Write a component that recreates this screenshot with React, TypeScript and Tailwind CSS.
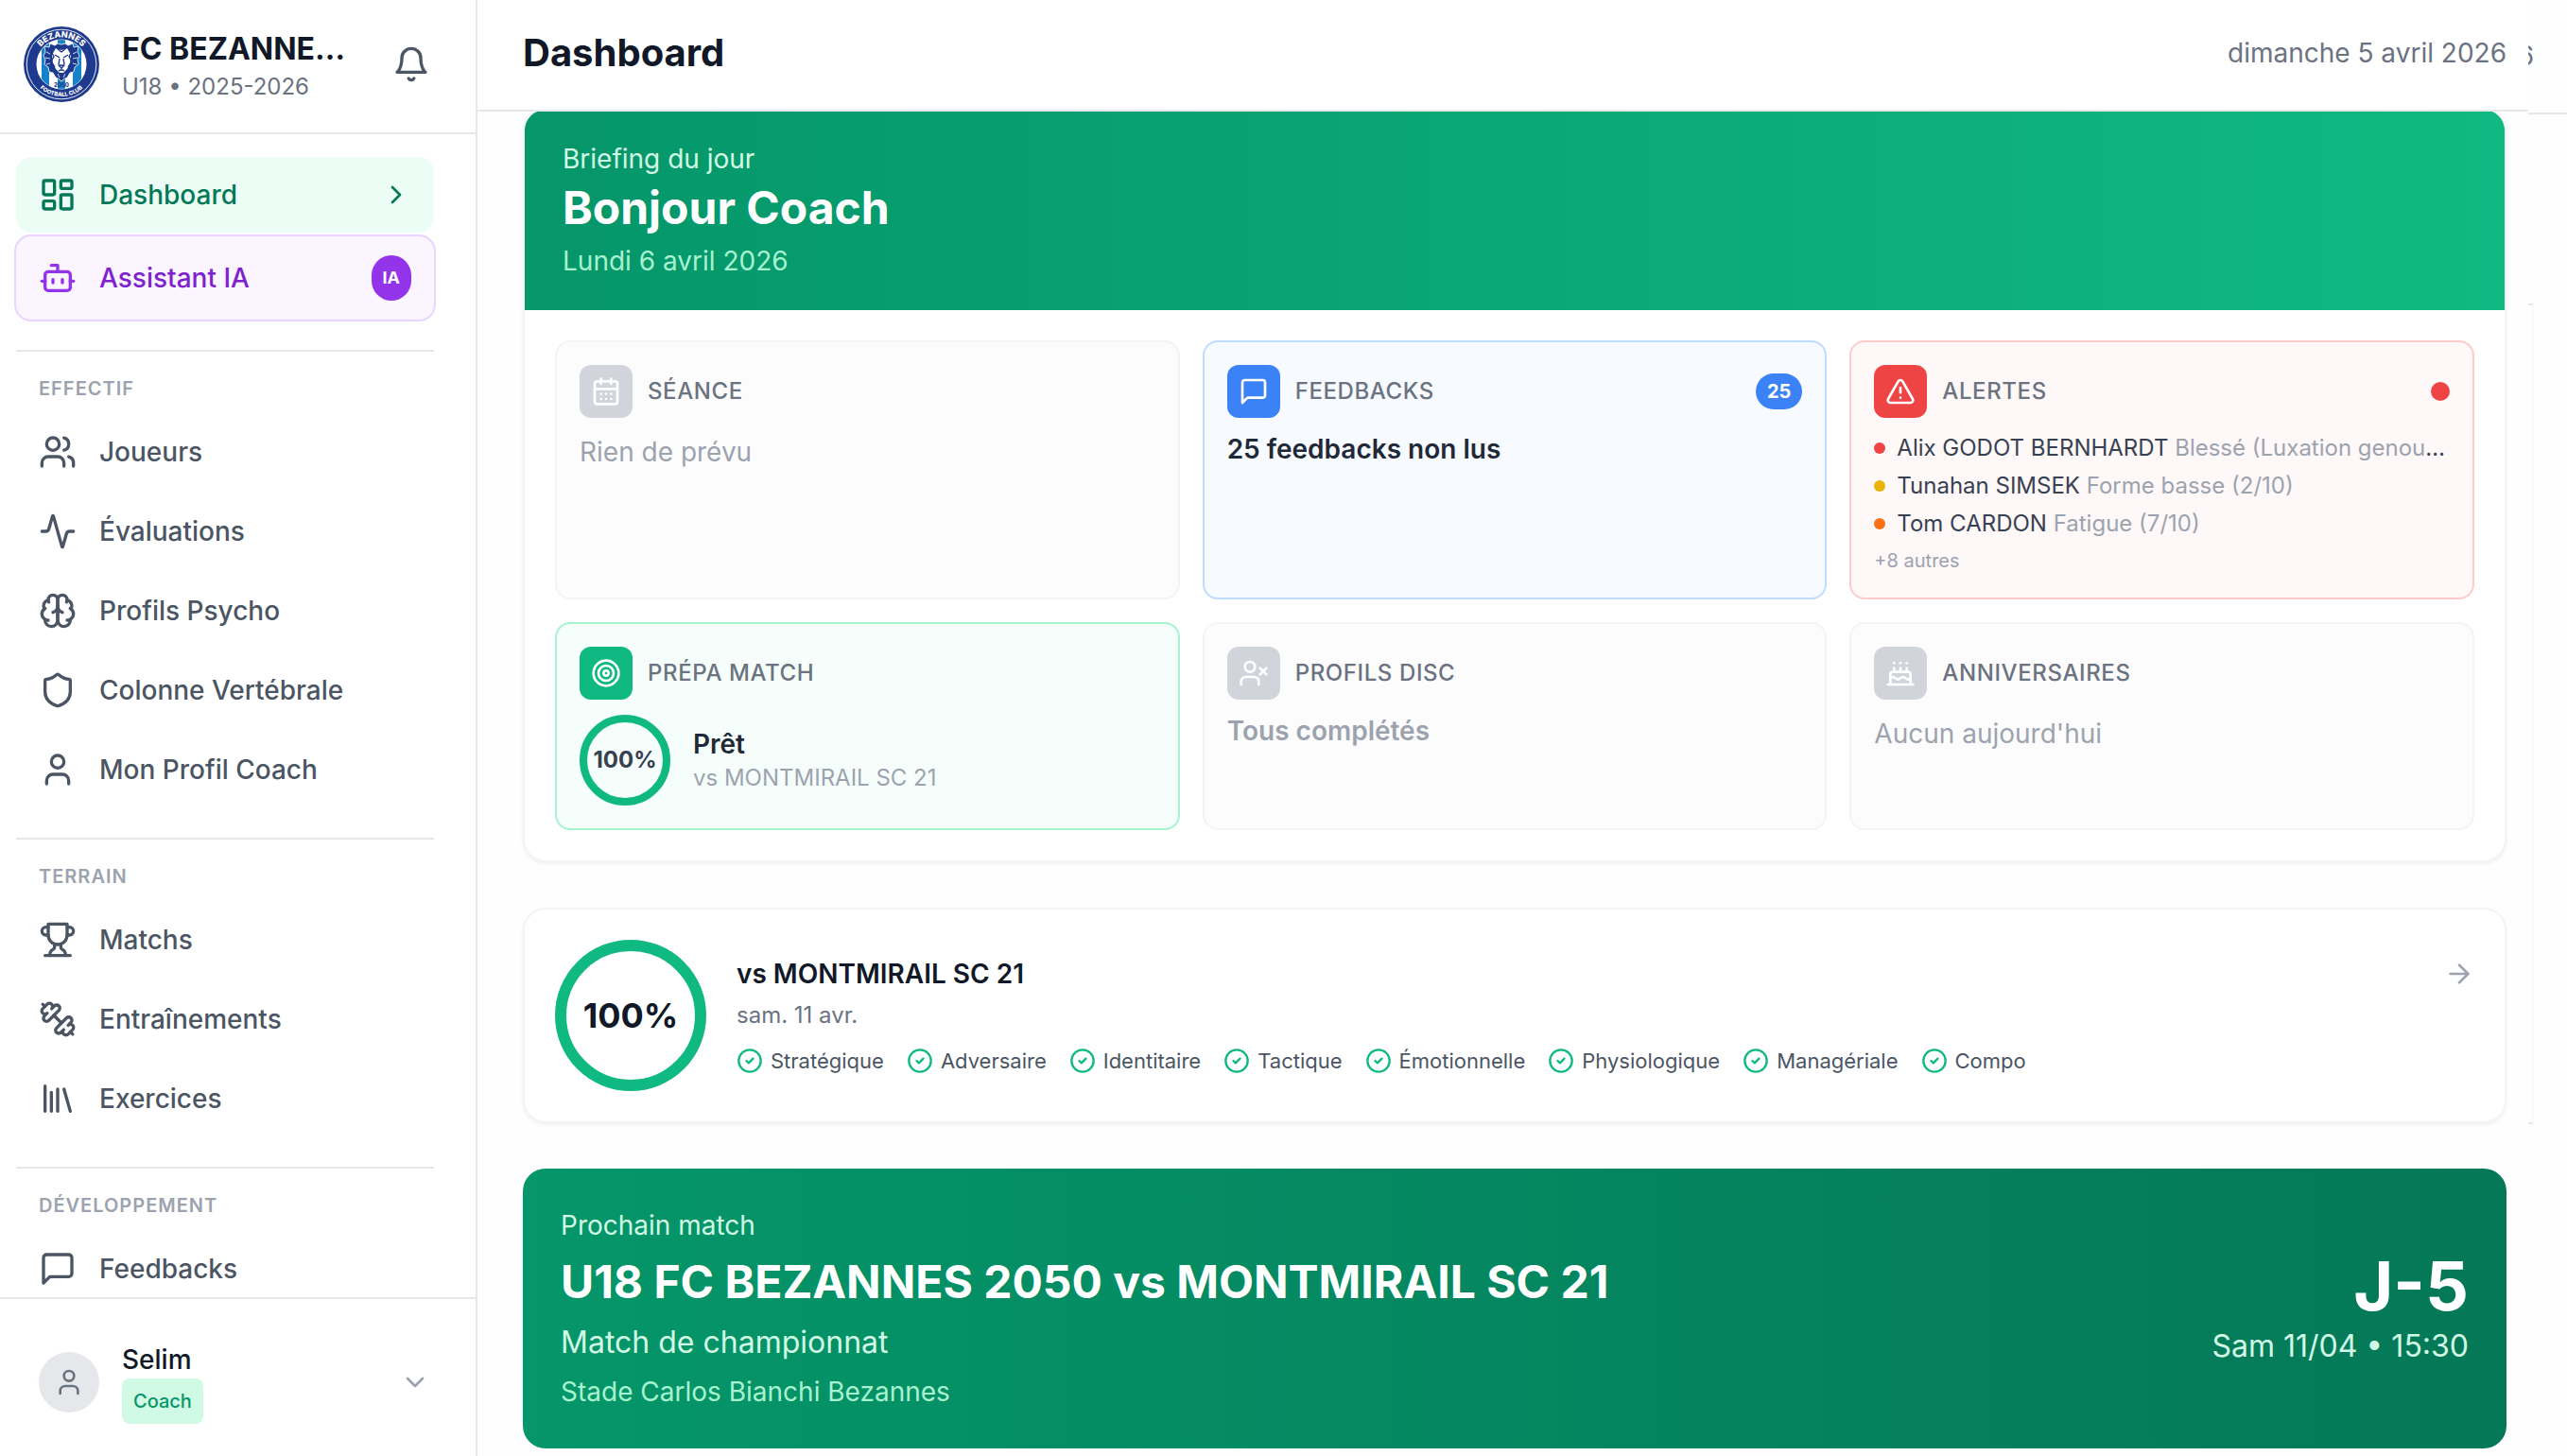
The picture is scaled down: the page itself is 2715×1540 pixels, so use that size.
import type { ReactNode } from 'react';
import {
  Activity,
  ArrowRight,
  Bot,
  Cake,
  CalendarDays,
  ChevronDown,
  ChevronRight,
  CircleCheck,
  LayoutDashboard,
  Library,
  Shield,
  Target,
  TriangleAlert,
  User,
  UserX,
  Users,
} from 'lucide-react';

type IconProps = { className?: string };

function StrokeIcon({ className, paths }: IconProps & { paths: string[] }) {
  return (
    <svg
      className={className}
      viewBox="0 0 24 24"
      fill="none"
      stroke="currentColor"
      strokeWidth="2"
      strokeLinecap="round"
      strokeLinejoin="round"
      aria-hidden="true"
    >
      {paths.map((d) => (
        <path key={d} d={d} />
      ))}
    </svg>
  );
}

const BellIcon = ({ className }: IconProps) => (
  <StrokeIcon
    className={className}
    paths={['M6 8a6 6 0 0 1 12 0c0 7 3 9 3 9H3s3-2 3-9', 'M10.3 21a1.94 1.94 0 0 0 3.4 0']}
  />
);

const MessageIcon = ({ className }: IconProps) => (
  <StrokeIcon className={className} paths={['M21 15a2 2 0 0 1-2 2H7l-4 4V5a2 2 0 0 1 2-2h14a2 2 0 0 1 2 2z']} />
);

const BrainIcon = ({ className }: IconProps) => (
  <StrokeIcon
    className={className}
    paths={[
      'M12 5a3 3 0 1 0-5.997.125 4 4 0 0 0-2.526 5.77 4 4 0 0 0 .556 6.588A4 4 0 1 0 12 18Z',
      'M12 5a3 3 0 1 1 5.997.125 4 4 0 0 1 2.526 5.77 4 4 0 0 1-.556 6.588A4 4 0 1 1 12 18Z',
      'M15 13a4.5 4.5 0 0 1-3-4 4.5 4.5 0 0 1-3 4',
      'M17.599 6.5a3 3 0 0 0 .399-1.375',
      'M6.003 5.125A3 3 0 0 0 6.401 6.5',
      'M3.477 10.896a4 4 0 0 1 .585-.396',
      'M19.938 10.5a4 4 0 0 1 .585.396',
      'M6 18a4 4 0 0 1-1.967-.516',
      'M19.967 17.484A4 4 0 0 1 18 18',
    ]}
  />
);

const TrophyIcon = ({ className }: IconProps) => (
  <StrokeIcon
    className={className}
    paths={[
      'M6 9H4.5a2.5 2.5 0 0 1 0-5H6',
      'M18 9h1.5a2.5 2.5 0 0 0 0-5H18',
      'M4 22h16',
      'M10 14.66V17c0 .55-.47.98-.97 1.21C7.85 18.75 7 20.24 7 22',
      'M14 14.66V17c0 .55.47.98.97 1.21C16.15 18.75 17 20.24 17 22',
      'M18 2H6v7a6 6 0 0 0 12 0V2Z',
    ]}
  />
);

const DumbbellIcon = ({ className }: IconProps) => (
  <StrokeIcon
    className={className}
    paths={[
      'M14.4 14.4 9.6 9.6',
      'M18.657 21.485a2 2 0 1 1-2.829-2.828l-1.767 1.768a2 2 0 1 1-2.829-2.829l6.364-6.364a2 2 0 1 1 2.829 2.829l-1.768 1.767a2 2 0 1 1 2.828 2.829z',
      'm21.5 21.5-1.4-1.4',
      'M3.9 3.9 2.5 2.5',
      'M6.404 12.768a2 2 0 1 1-2.829-2.829l1.768-1.767a2 2 0 1 1-2.828-2.829l2.828-2.828a2 2 0 1 1 2.829 2.828l1.767-1.768a2 2 0 1 1 2.829 2.829z',
    ]}
  />
);

function ClubLogo() {
  return (
    <svg className="size-20 shrink-0" viewBox="0 0 80 80" role="img" aria-label="FC Bezannes">
      <defs>
        <path id="logo-top" d="M11.5 40a28.5 28.5 0 0 1 57 0" />
        <path id="logo-bottom" d="M6 40a34 34 0 0 0 68 0" />
        <clipPath id="logo-disc">
          <circle cx="40" cy="40" r="26" />
        </clipPath>
      </defs>
      <circle cx="40" cy="40" r="40" fill="#1e3a8f" />
      <circle cx="40" cy="40" r="36.8" fill="none" stroke="#fff" strokeWidth="0.9" />
      <circle cx="40" cy="40" r="26.5" fill="#fff" />
      <g clipPath="url(#logo-disc)" fill="#1583cc">
        <path d="M19 10h8v60h-8zM36 10h8v60h-8zM52 10h9v60h-9z" />
      </g>
      <path
        d="M40 19l4-1 3 2 5-2 1 4 5-1-1 6 2 4-2 4 1 5-4 3-1 5-4 1-3 5-4 2-2 2-2-2-4-2-3-5-4-1-1-5-4-3 1-5-2-4 2-4-1-6 5 1 1-4 5 2 3-2z"
        fill="#1e3a8f"
        stroke="#fff"
        strokeWidth="0.8"
      />
      <path d="M34 23l6 2 6-2 4 7-1 9-3 6-4 4h-4l-4-4-3-6-1-9z" fill="#fff" />
      <path
        d="M33 30l5 3M47 30l-5 3M38 34l-1 6M42 34l1 6M37 41h6l-3 3zM40 44v2M37 47q3-2 6 0M29 26l3 6-3 5 4 6M51 26l-3 6 3 5-4 6M35 23l5 4 5-4M40 20v4"
        fill="none"
        stroke="#1e3a8f"
        strokeWidth="1.4"
        strokeLinejoin="round"
      />
      <path d="M24 27l4 2M23 33l5 1M24 40l4-1M56 27l-4 2M57 33l-5 1M56 40l-4-1M36 50l2 4M44 50l-2 4" stroke="#fff" strokeWidth="0.8" />
      <g fill="#fff" fontFamily="Inter, sans-serif" fontWeight="800" textAnchor="middle">
        <text fontSize="9">
          <textPath href="#logo-top" startOffset="50%">BEZANNES</textPath>
        </text>
        <text fontSize="6">
          <textPath href="#logo-bottom" startOffset="50%">FOOTBALL CLUB</textPath>
        </text>
        <text x="40" y="64" fontSize="6" fill="#1e3a8f">2050</text>
      </g>
    </svg>
  );
}

type NavEntry = { label: string; icon: (props: IconProps) => ReactNode };

const sections: { title: string; items: NavEntry[] }[] = [
  {
    title: 'Effectif',
    items: [
      { label: 'Joueurs', icon: (p) => <Users {...p} /> },
      { label: 'Évaluations', icon: (p) => <Activity {...p} /> },
      { label: 'Profils Psycho', icon: BrainIcon },
      { label: 'Colonne Vertébrale', icon: (p) => <Shield {...p} /> },
      { label: 'Mon Profil Coach', icon: (p) => <User {...p} /> },
    ],
  },
  {
    title: 'Terrain',
    items: [
      { label: 'Matchs', icon: TrophyIcon },
      { label: 'Entraînements', icon: DumbbellIcon },
      { label: 'Exercices', icon: (p) => <Library {...p} /> },
    ],
  },
  {
    title: 'Développement',
    items: [{ label: 'Feedbacks', icon: MessageIcon }],
  },
];

function Sidebar() {
  return (
    <aside className="flex w-[505px] shrink-0 flex-col border-r-2 border-[#e5e7eb] bg-white">
      <div className="flex items-center gap-6 border-b-2 border-[#e5e7eb] pt-7 pr-8 pb-8 pl-[25px]">
        <ClubLogo />
        <div className="min-w-0 flex-1">
          <p className="truncate text-[32px] leading-12 font-bold text-[#111827]">FC BEZANNES 2050</p>
          <p className="text-2xl leading-8 text-[#6b7280]">U18 • 2025-2026</p>
        </div>
        <button type="button" aria-label="Notifications" className="p-4 text-[#4b5563]">
          <BellIcon className="size-10" />
        </button>
      </div>

      <nav className="min-h-0 flex-1 overflow-hidden pt-6 pr-11 pl-[17px]">
        <a href="#" className="flex items-center gap-6 rounded-2xl bg-[#ecfdf5] px-6 py-5 text-[#047857]">
          <LayoutDashboard className="size-10" />
          <span className="flex-1 text-[28px] leading-10 font-medium">Dashboard</span>
          <ChevronRight className="size-8" />
        </a>
        <a
          href="#"
          className="-mx-0.5 mt-0.5 flex items-center gap-6 rounded-[18px] border-2 border-[#e9d5ff] bg-[#faf5ff] px-6 py-5 text-[#7e22ce]"
        >
          <Bot className="size-10 text-[#9333ea]" />
          <span className="flex-1 text-[28px] leading-10 font-medium">Assistant IA</span>
          <span className="rounded-full bg-[#9333ea] px-3 py-2 text-lg leading-8 font-bold text-white">IA</span>
        </a>

        {sections.map((section, index) => (
          <div
            key={section.title}
            className={`${index === 0 ? 'mt-[30px]' : 'mt-8'} border-t-2 border-[#e5e7eb] pt-6`}
          >
            <p className="mb-3 px-6 text-xl leading-[30px] font-semibold tracking-wider text-[#9ca3af] uppercase">
              {section.title}
            </p>
            <ul className="space-y-1">
              {section.items.map(({ label, icon: Icon }) => (
                <li key={label}>
                  <a href="#" className="flex items-center gap-6 px-6 py-5 text-[#4b5563]">
                    <Icon className="size-10 shrink-0" />
                    <span className="text-[28px] leading-10 font-medium">{label}</span>
                  </a>
                </li>
              ))}
            </ul>
          </div>
        ))}
      </nav>

      <div className="border-t-2 border-[#e5e7eb] pt-7 pr-8 pb-[18px] pl-[25px]">
        <button type="button" className="flex w-full items-center gap-6 p-4 text-left">
          <span className="flex size-16 items-center justify-center rounded-full bg-[#e5e7eb]">
            <User className="size-8 text-[#6b7280]" />
          </span>
          <span className="flex flex-1 flex-col items-start">
            <span className="text-[28px] leading-10 font-medium text-[#111827]">Selim</span>
            <span className="rounded-lg bg-[#d1fae5] px-3 py-2 text-xl leading-8 font-medium text-[#059669]">
              Coach
            </span>
          </span>
          <ChevronDown className="size-8 text-[#9ca3af]" />
        </button>
      </div>
    </aside>
  );
}

const tones = {
  muted: { box: 'border-[#f3f4f6] bg-[#fcfcfd]', icon: 'bg-[#d1d5db]' },
  blue: { box: 'border-[#bfdbfe] bg-[#f7faff]', icon: 'bg-[#3b82f6]' },
  red: { box: 'border-[#fecaca] bg-[#fef8f8]', icon: 'bg-[#ef4444]' },
  green: { box: 'border-[#a7f3d0] bg-[#f5fefa]', icon: 'bg-[#10b981]' },
};

type TileProps = {
  tone: keyof typeof tones;
  title: string;
  icon: ReactNode;
  extra?: ReactNode;
  children: ReactNode;
};

function Tile({ tone, title, icon, extra, children }: TileProps) {
  return (
    <section className={`min-w-0 rounded-2xl border-2 p-6 ${tones[tone].box}`}>
      <div className="mb-4 flex items-center gap-4">
        <span className={`flex size-14 items-center justify-center rounded-xl text-white ${tones[tone].icon}`}>
          {icon}
        </span>
        <h3 className="flex-1 text-2xl leading-8 font-medium tracking-wide text-[#6b7280] uppercase">{title}</h3>
        {extra}
      </div>
      {children}
    </section>
  );
}

function Ring({ size, stroke, children }: { size: number; stroke: number; children: ReactNode }) {
  return (
    <div className="grid shrink-0 place-items-center">
      <svg className="col-start-1 row-start-1" width={size} height={size} aria-hidden="true">
        <circle
          cx={size / 2}
          cy={size / 2}
          r={(size - stroke) / 2}
          fill="none"
          stroke="#10b981"
          strokeWidth={stroke}
        />
      </svg>
      <span className="col-start-1 row-start-1">{children}</span>
    </div>
  );
}

const alerts = [
  { name: 'Alix GODOT BERNHARDT', detail: 'Blessé (Luxation genou gauche)', dot: 'bg-[#ef4444]' },
  { name: 'Tunahan SIMSEK', detail: 'Forme basse (2/10)', dot: 'bg-[#eab308]' },
  { name: 'Tom CARDON', detail: 'Fatigue (7/10)', dot: 'bg-[#f97316]' },
];

function Briefing() {
  return (
    <section className="overflow-hidden rounded-3xl border-2 border-[#f3f4f6] bg-white shadow-[0_2px_4px_rgba(0,0,0,0.05)]">
      <div className="bg-linear-to-r from-[#059669] to-[#10b981] px-10 py-8">
        <p className="text-[28px] leading-10 text-[#d1fae5]">Briefing du jour</p>
        <h2 className="text-5xl leading-16 font-bold text-white">Bonjour Coach</h2>
        <p className="mt-1 text-[28px] leading-10 text-[#a7f3d0]">Lundi 6 avril 2026</p>
      </div>
      <div className="grid grid-cols-3 gap-6 p-8">
        <Tile tone="muted" title="Séance" icon={<CalendarDays className="size-8" />}>
          <p className="text-[28px] leading-10 text-[#9ca3af]">Rien de prévu</p>
        </Tile>
        <Tile
          tone="blue"
          title="Feedbacks"
          icon={<MessageIcon className="size-8" />}
          extra={
            <span className="rounded-full bg-[#3b82f6] px-3 py-1 text-xl leading-[30px] font-bold text-white">25</span>
          }
        >
          <p className="text-[28px] leading-[34px] font-semibold text-[#1f2937]">25 feedbacks non lus</p>
        </Tile>
        <Tile
          tone="red"
          title="Alertes"
          icon={<TriangleAlert className="size-8" />}
          extra={<span className="size-5 rounded-full bg-[#ef4444]" />}
        >
          <ul className="space-y-2">
            {alerts.map((alert) => (
              <li key={alert.name} className="flex items-center gap-3">
                <span className={`size-3 shrink-0 rounded-full ${alert.dot}`} />
                <span className="truncate text-2xl leading-8 text-[#374151]">
                  {alert.name} <span className="text-[#9ca3af]">{alert.detail}</span>
                </span>
              </li>
            ))}
          </ul>
          <p className="mt-2 text-xl leading-[30px] text-[#9ca3af]">+8 autres</p>
        </Tile>
        <Tile tone="green" title="Prépa match" icon={<Target className="size-8" />}>
          <div className="flex items-center gap-6">
            <Ring size={96} stroke={8}>
              <span className="text-2xl font-bold text-[#374151]">100%</span>
            </Ring>
            <div>
              <p className="text-[28px] leading-9 font-semibold text-[#1f2937]">Prêt</p>
              <p className="mt-0.5 text-2xl leading-8 text-[#9ca3af]">vs MONTMIRAIL SC 21</p>
            </div>
          </div>
        </Tile>
        <Tile tone="muted" title="Profils DISC" icon={<UserX className="size-8" />}>
          <p className="text-[28px] leading-[34px] font-semibold text-[#9ca3af]">Tous complétés</p>
        </Tile>
        <Tile tone="muted" title="Anniversaires" icon={<Cake className="size-8" />}>
          <p className="text-[28px] leading-10 text-[#9ca3af]">Aucun aujourd'hui</p>
        </Tile>
      </div>
    </section>
  );
}

const checks = [
  'Stratégique',
  'Adversaire',
  'Identitaire',
  'Tactique',
  'Émotionnelle',
  'Physiologique',
  'Managériale',
  'Compo',
];

function MatchPrep() {
  return (
    <section className="flex items-center gap-8 rounded-3xl border-2 border-[#f3f4f6] bg-white p-8 shadow-[0_2px_4px_rgba(0,0,0,0.05)]">
      <Ring size={160} stroke={12}>
        <span className="text-4xl font-bold text-[#111827]">100%</span>
      </Ring>
      <div className="min-w-0 flex-1">
        <div className="flex items-center justify-between">
          <h3 className="text-[28px] leading-10 font-semibold text-[#111827]">vs MONTMIRAIL SC 21</h3>
          <a href="#" aria-label="Voir la préparation" className="text-[#9ca3af]">
            <ArrowRight className="size-8" />
          </a>
        </div>
        <p className="mt-2 text-2xl leading-8 text-[#6b7280]">sam. 11 avr.</p>
        <ul className="mt-4 flex flex-wrap gap-x-6">
          {checks.map((check) => (
            <li key={check} className="flex items-center gap-2 text-[22px] leading-8 text-[#4b5563]">
              <CircleCheck className="size-7 text-[#10b981]" />
              {check}
            </li>
          ))}
        </ul>
      </div>
    </section>
  );
}

function NextMatch() {
  return (
    <section className="flex items-center justify-between rounded-3xl bg-linear-to-r from-[#059669] to-[#047857] p-10">
      <div className="space-y-2">
        <p className="text-[28px] leading-10 text-[#d1fae5]">Prochain match</p>
        <h2 className="text-5xl leading-16 font-bold text-white">U18 FC BEZANNES 2050 vs MONTMIRAIL SC 21</h2>
        <p className="text-[32px] leading-12 text-[#d1fae5]">Match de championnat</p>
        <p className="text-[28px] leading-10 text-[#a7f3d0]">Stade Carlos Bianchi Bezannes</p>
      </div>
      <div className="text-right">
        <p className="text-7xl leading-20 font-bold text-white">J-5</p>
        <p className="text-[32px] leading-12 text-[#d1fae5]">Sam 11/04 • 15:30</p>
      </div>
    </section>
  );
}

// Slice of the page behind that stays visible on the right
function BackdropEdge() {
  return (
    <div className="w-[41px] shrink-0" aria-hidden="true">
      <div className="h-[121px] border-b-2 border-[#e5e7eb] pt-[39px]">
        <div className="flex w-1.5 justify-end overflow-hidden text-[28px] leading-10 text-[#6b7280]">6</div>
      </div>
      <div className="mt-[200px] h-[868px] w-1.5 border-y-2 border-r-2 border-y-[#e5e7eb] border-r-[#fafafa]" />
    </div>
  );
}

export default function App() {
  return (
    <div className="flex h-screen overflow-hidden bg-[#fefefe] font-['Inter',sans-serif]">
      <Sidebar />
      <div className="flex min-w-0 flex-1 flex-col">
        <header className="z-10 flex items-center justify-between border-b-2 border-[#e5e7eb] bg-white pt-8 pr-[23px] pb-9 pl-12">
          <h1 className="text-[40px] leading-12 font-bold text-[#111827]">Dashboard</h1>
          <p className="text-[28px] leading-10 text-[#6b7280]">dimanche 5 avril 2026</p>
        </header>
        <main className="-mt-1 flex flex-col gap-12 pr-[23px] pl-12">
          <Briefing />
          <MatchPrep />
          <NextMatch />
        </main>
      </div>
      <BackdropEdge />
    </div>
  );
}
